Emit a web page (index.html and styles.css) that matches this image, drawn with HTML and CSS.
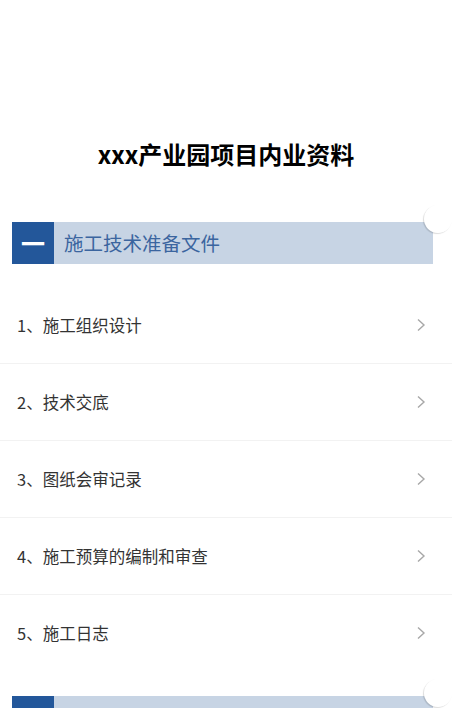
FILE: index.html
```
<!DOCTYPE html>
<html lang="zh-CN">
<head>
<meta charset="utf-8">
<title>xxx产业园项目内业资料</title>
<link rel="stylesheet" href="styles.css">
</head>
<body>
<div class="page">
  <h1 class="title">xxx产业园项目内业资料</h1>

  <section class="group">
    <div class="bar">
      <span class="bar-num">一</span>
      <span class="bar-text">施工技术准备文件</span>
    </div>
    <ul class="list">
      <li class="row"><span class="row-text">1、施工组织设计</span><svg class="chev" viewBox="0 0 10 14" width="10" height="14"><path d="M2 1.5 L8 7 L2 12.5" fill="none" stroke="#a8a8a8" stroke-width="1.4"/></svg></li>
      <li class="row"><span class="row-text">2、技术交底</span><svg class="chev" viewBox="0 0 10 14" width="10" height="14"><path d="M2 1.5 L8 7 L2 12.5" fill="none" stroke="#a8a8a8" stroke-width="1.4"/></svg></li>
      <li class="row"><span class="row-text">3、图纸会审记录</span><svg class="chev" viewBox="0 0 10 14" width="10" height="14"><path d="M2 1.5 L8 7 L2 12.5" fill="none" stroke="#a8a8a8" stroke-width="1.4"/></svg></li>
      <li class="row"><span class="row-text">4、施工预算的编制和审查</span><svg class="chev" viewBox="0 0 10 14" width="10" height="14"><path d="M2 1.5 L8 7 L2 12.5" fill="none" stroke="#a8a8a8" stroke-width="1.4"/></svg></li>
      <li class="row"><span class="row-text">5、施工日志</span><svg class="chev" viewBox="0 0 10 14" width="10" height="14"><path d="M2 1.5 L8 7 L2 12.5" fill="none" stroke="#a8a8a8" stroke-width="1.4"/></svg></li>
    </ul>
  </section>

  <section class="group">
    <div class="bar">
      <span class="bar-num">二</span>
      <span class="bar-text">施工现场准备</span>
    </div>
  </section>
</div>
</body>
</html>
```
FILE: styles.css
```
html, body {
  margin: 0;
  padding: 0;
  background: #ffffff;
}
body {
  font-family: "Noto Sans CJK SC", "Noto Sans", sans-serif;
  color: #333333;
  overflow: hidden;
  height: 708px;
}
.page {
  padding-top: 138px;
}
.title {
  margin: 0;
  text-align: center;
  font-size: 24px;
  line-height: 32px;
  font-weight: 700;
  color: #000000;
}
.group {
  margin-top: 52px;
}
.group + .group {
  margin-top: 0;
}
.bar {
  position: relative;
  display: flex;
  align-items: center;
  height: 42px;
  margin: 0 19px 0 12px;
  background: #c7d4e4;
}
.bar::after {
  content: "";
  position: absolute;
  right: -19px;
  top: -17px;
  width: 28px;
  height: 28px;
  border-radius: 50%;
  background: #ffffff;
  box-shadow: -1px 1px 1px 0 rgba(0, 0, 0, 0.14);
}
.bar-num {
  display: flex;
  align-items: center;
  justify-content: center;
  width: 42px;
  height: 42px;
  background: #23579a;
  color: #ffffff;
  font-size: 24px;
  font-weight: 700;
  line-height: 42px;
}
.bar-text {
  margin-left: 10px;
  font-size: 19.5px;
  color: #3b659f;
  line-height: 42px;
}
.list {
  list-style: none;
  margin: 23px 0 24px;
  padding: 0;
}
.row {
  display: flex;
  align-items: center;
  justify-content: space-between;
  height: 76px;
  padding: 0 26px 0 17px;
  border-bottom: 1px solid #f2f2f2;
}
.row:last-child {
  border-bottom: 1px solid transparent;
}
.row-text {
  font-size: 16.5px;
  color: #333333;
}
.chev {
  display: block;
}
```
